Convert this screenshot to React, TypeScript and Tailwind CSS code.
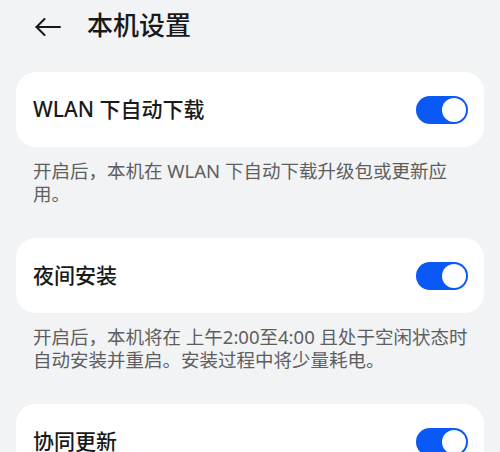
import React, { useState } from 'react'

interface SettingItem {
  id: string
  title: string
  description?: string
}

const items: SettingItem[] = [
  {
    id: 'wlan',
    title: 'WLAN 下自动下载',
    description: '开启后，本机在 WLAN 下自动下载升级包或更新应用。',
  },
  {
    id: 'night',
    title: '夜间安装',
    description: '开启后，本机将在 上午2:00至4:00 且处于空闲状态时自动安装并重启。安装过程中将少量耗电。',
  },
  {
    id: 'sync',
    title: '协同更新',
  },
]

function Toggle({ on, onChange }: { on: boolean; onChange: () => void }) {
  return (
    <button
      onClick={onChange}
      className={`relative h-[28px] w-[52px] shrink-0 rounded-full transition-colors ${
        on ? 'bg-[#0a59f7]' : 'bg-[#d4d6d9]'
      }`}
    >
      <span
        className={`absolute top-[2px] h-[24px] w-[24px] rounded-full bg-white transition-all ${
          on ? 'left-[26px]' : 'left-[2px]'
        }`}
      />
    </button>
  )
}

export default function App() {
  const [enabled, setEnabled] = useState<Record<string, boolean>>({
    wlan: true,
    night: true,
    sync: true,
  })

  return (
    <div
      className="h-[452px] w-[500px] overflow-hidden bg-[#f1f3f5] text-[#191919]"
      style={{ fontFamily: '"Noto Sans", "Noto Sans CJK SC", sans-serif' }}
    >
      {/* Header */}
      <div className="flex h-[72px] items-start pt-[6px]">
        <button className="ml-[35px] mt-[12px] text-[#191919]">
          <svg width="26" height="18" viewBox="0 0 26 18" fill="none">
            <path d="M25 9H1.5" stroke="currentColor" strokeWidth="2" strokeLinecap="round" />
            <path d="M9.5 1L1.5 9L9.5 17" stroke="currentColor" strokeWidth="2" strokeLinecap="round" strokeLinejoin="round" />
          </svg>
        </button>
        <h1 className="ml-[26px] text-[26px] font-medium leading-[38px]">本机设置</h1>
      </div>

      <main className="flex flex-col">
        {items.map((item) => (
          <section key={item.id} className="flex flex-col">
            <div className="mx-4 flex h-[75px] items-center justify-between rounded-[20px] bg-white pl-[17px] pr-[16px]">
              <span className="text-[21px] font-medium">{item.title}</span>
              <Toggle
                on={enabled[item.id]}
                onChange={() => setEnabled((s) => ({ ...s, [item.id]: !s[item.id] }))}
              />
            </div>
            {item.description && (
              <p className="mb-[33px] mt-[12px] pl-[33px] pr-[30px] text-[18.5px] leading-[23px] text-[#5e5e5e]">
                {item.description}
              </p>
            )}
          </section>
        ))}
      </main>
    </div>
  )
}
